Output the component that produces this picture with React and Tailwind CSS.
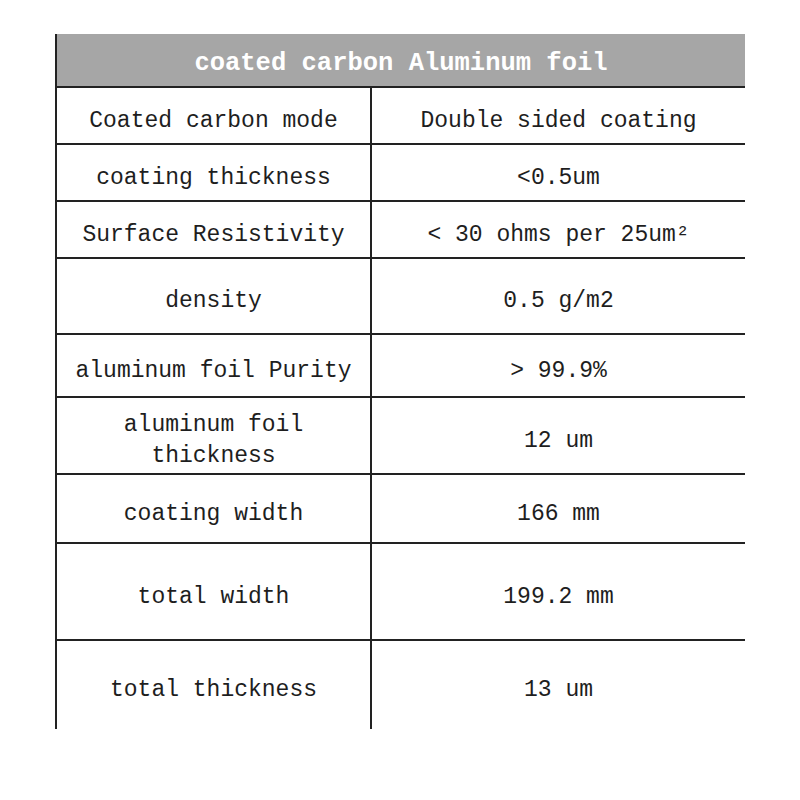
import React from 'react';

const rows = [
  { label: 'Coated carbon mode', value: 'Double sided coating', h: 'h-[57px]' },
  { label: 'coating thickness', value: '<0.5um', h: 'h-[57px]' },
  { label: 'Surface Resistivity', value: '< 30 ohms per 25um²', h: 'h-[57px]' },
  { label: 'density', value: '0.5 g/m2', h: 'h-[76px]' },
  { label: 'aluminum foil Purity', value: '> 99.9%', h: 'h-[63px]' },
  { label: ['aluminum foil', 'thickness'], value: '12 um', h: 'h-[77px]' },
  { label: 'coating width', value: '166 mm', h: 'h-[69px]' },
  { label: 'total width', value: '199.2 mm', h: 'h-[97px]' },
  { label: 'total thickness', value: '13 um', h: 'h-[88px]' },
];

const App = () => {
  return (
    <div className="w-[800px] h-[800px] bg-white pt-[34px] pl-[55px] font-['Liberation_Mono',monospace] text-[#1e1e1e]">
      <div className="w-[690px]">
        {/* Title bar */}
        <div className="h-[54px] pt-[8px] bg-[#a6a6a6] border-l-2 border-b-2 border-[#222] flex items-center justify-center text-white font-bold text-[25.5px]">
          coated carbon Aluminum foil
        </div>

        {/* Spec rows */}
        {rows.map((row, i) => {
          const last = i === rows.length - 1;
          return (
            <div key={i} className={`flex ${row.h}`}>
              <div
                className={`w-[317px] shrink-0 pt-[11px] flex flex-col items-center justify-center text-[23px] leading-[31px] border-l-2 border-r-2 border-[#222] ${last ? '' : 'border-b-2'}`}
              >
                {Array.isArray(row.label)
                  ? row.label.map((t) => <span key={t}>{t}</span>)
                  : row.label}
              </div>
              <div
                className={`flex-1 pt-[11px] flex items-center justify-center text-[23px] border-[#222] ${last ? '' : 'border-b-2'}`}
              >
                {row.value}
              </div>
            </div>
          );
        })}
      </div>
    </div>
  );
};

export default App;
